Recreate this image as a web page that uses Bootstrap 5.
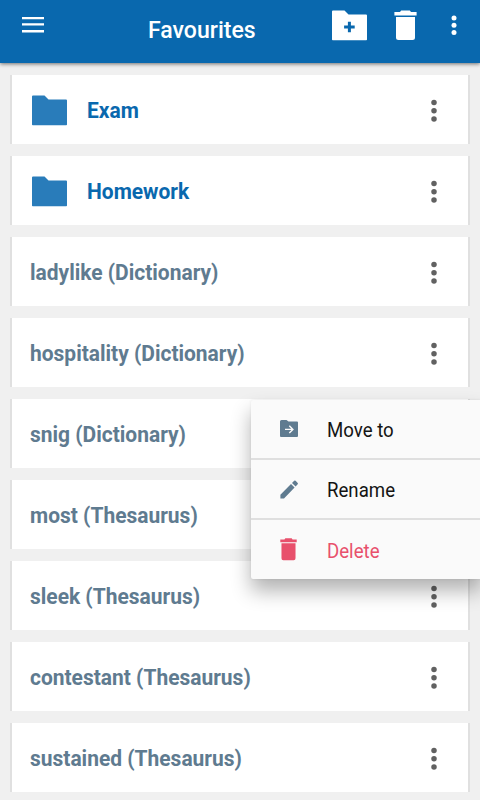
<!DOCTYPE html>
<html lang="en">
<head>
<meta charset="utf-8">
<meta name="viewport" content="width=device-width, initial-scale=1">
<title>Favourites</title>
<link rel="stylesheet" href="https://cdn.jsdelivr.net/npm/bootstrap@5.3.0/dist/css/bootstrap.min.css">
<style>
  body { font-family: Roboto, "Liberation Sans", sans-serif; background: #f0f0f0; height: 800px; overflow: hidden; }
  svg { display: block; flex: none; }
  .app-bar { height: 63px; background: #0968ae; box-shadow: 0 1px 4px rgba(0,0,0,.55); padding: 0; }
  .bar-btn { border: 0; background: none; padding: 0; color: #fff; }
  .menu-btn { margin: 16px 0 0 21.500px; }
  .app-title { font-size: 23px; font-weight: 500; line-height: 28px; color: #fff; margin: 17px 0 0 104.500px; width: 112px; white-space: nowrap; }
  .narrow { display: inline-block; transform-origin: 0 50%; transform: scaleX(.953); white-space: nowrap; }
  .app-title .narrow { transform: scaleX(1.003); }
  .bar-tools { margin: 10px 23px 0 0; }
  .more-btn { margin: 5px 0 0 34px; }
  .fav-list { padding: 12px 10px 0; gap: 12px; }
  .fav-item { height: 69px; background: #fff; border: solid #e0e0e0; border-width: 0 2px; border-radius: 0; padding: 3px 31.500px 0 18.400px; font-size: 22px; font-weight: 700; line-height: 30px; color: #5f7b90; }
  .fav-item.folder { color: #0968ae; padding-left: 20px; }
  .folder svg:first-child { margin: -2px 18.500px 0 0; }
  .dots { color: #616161; margin-top: -1px; }
  .fav-menu { left: 251px; top: 400px; width: 231px; height: 179px; background: #fafafa; border-radius: 2px; box-shadow: 0 12px 20px rgba(0,0,0,.3), 0 0 3px rgba(0,0,0,.08); font-size: 20px; color: #141414; }
  .menu-row { height: 60px; padding: 0 0 0 25.500px; border-bottom: 2px solid #dfdfdf; line-height: 28px; }
  .menu-row:last-child { border: 0; height: 59px; color: #e8506c; }
  .menu-row .icon { width: 24px; margin-right: 26px; display: flex; justify-content: center; color: #5f7b90; }
  .menu-row:last-child .icon { color: #e8506c; }
  .menu-row .narrow { transform: translateY(1px) scaleX(.932); }
</style>
</head>
<body>
<svg width="0" height="0" class="position-absolute">
  <symbol id="dots" viewBox="0 0 6 24"><circle cx="3" cy="3.400" r="2.750"/><circle cx="3" cy="11.700" r="2.750"/><circle cx="3" cy="20" r="2.750"/></symbol>
  <symbol id="folder" viewBox="0 0 36 31"><path d="M1 .5H12.500L16.500 4.500H34Q35 4.500 35 5.500V29.500Q35 30.300 34.200 30.300H.8Q0 30.300 0 29.500V1.500Q0 .5 1 .5Z"/></symbol>
  <symbol id="bin" viewBox="0 0 23 31"><path d="M.4 2H6L7.200.4H15.800L17 2H22.600V5.600H.4ZM2 7H21V27.500Q21 30 18.500 30H4.500Q2 30 2 27.500Z"/></symbol>
</svg>

<header class="app-bar navbar align-items-start position-relative flex-nowrap justify-content-start">
  <button class="bar-btn menu-btn" aria-label="Menu">
    <svg width="22" height="18" fill="currentColor"><path d="M0 .9H22V3.200H0ZM0 7.300H22V9.600H0ZM0 14H22V16.400H0Z"/></svg>
  </button>
  <h1 class="app-title"><span class="narrow">Favourites</span></h1>
  <div class="bar-tools d-flex align-items-start ms-auto">
    <button class="bar-btn" aria-label="New folder">
      <svg width="36" height="31" fill="currentColor"><use href="#folder" width="36" height="31"/><path d="M15.900 11.700h3v3.800h3.800v3h-3.800v3.800h-3v-3.800h-3.800v-3h3.800Z" fill="#0968ae"/></svg>
    </button>
    <button class="bar-btn ms-4 ps-0 pe-0" aria-label="Delete">
      <svg width="25" height="31" fill="currentColor"><use href="#bin" x="2" width="23" height="31"/></svg>
    </button>
    <button class="bar-btn more-btn" aria-label="More">
      <svg width="6" height="21" fill="currentColor"><circle cx="3" cy="3" r="2.500"/><circle cx="3" cy="10.300" r="2.500"/><circle cx="3" cy="17.600" r="2.500"/></svg>
    </button>
  </div>
</header>

<main class="fav-list d-flex flex-column">
  <div class="fav-item folder d-flex align-items-center"><svg width="36" height="31" fill="#297cba"><use href="#folder"/></svg><span class="narrow">Exam</span><svg class="dots ms-auto" width="6" height="24" fill="currentColor"><use href="#dots"/></svg></div>
  <div class="fav-item folder d-flex align-items-center"><svg width="36" height="31" fill="#297cba"><use href="#folder"/></svg><span class="narrow">Homework</span><svg class="dots ms-auto" width="6" height="24" fill="currentColor"><use href="#dots"/></svg></div>
  <div class="fav-item d-flex align-items-center"><span class="narrow">ladylike (Dictionary)</span><svg class="dots ms-auto" width="6" height="24" fill="currentColor"><use href="#dots"/></svg></div>
  <div class="fav-item d-flex align-items-center"><span class="narrow">hospitality (Dictionary)</span><svg class="dots ms-auto" width="6" height="24" fill="currentColor"><use href="#dots"/></svg></div>
  <div class="fav-item d-flex align-items-center"><span class="narrow">snig (Dictionary)</span><svg class="dots ms-auto" width="6" height="24" fill="currentColor"><use href="#dots"/></svg></div>
  <div class="fav-item d-flex align-items-center"><span class="narrow">most (Thesaurus)</span><svg class="dots ms-auto" width="6" height="24" fill="currentColor"><use href="#dots"/></svg></div>
  <div class="fav-item d-flex align-items-center"><span class="narrow">sleek (Thesaurus)</span><svg class="dots ms-auto" width="6" height="24" fill="currentColor"><use href="#dots"/></svg></div>
  <div class="fav-item d-flex align-items-center"><span class="narrow">contestant (Thesaurus)</span><svg class="dots ms-auto" width="6" height="24" fill="currentColor"><use href="#dots"/></svg></div>
  <div class="fav-item d-flex align-items-center"><span class="narrow">sustained (Thesaurus)</span><svg class="dots ms-auto" width="6" height="24" fill="currentColor"><use href="#dots"/></svg></div>
</main>

<div class="fav-menu position-absolute">
  <div class="menu-row d-flex align-items-center">
    <span class="icon"><svg width="18" height="18" fill="currentColor"><path d="M1.500 0H6.500L8.500 1.600H17Q18 1.600 18 2.600V16Q18 17 17 17H1Q0 17 0 16V1.500Q0 0 1.500 0Z"/><path d="M5 9.400H12.500M9.300 5.800L12.900 9.400L9.300 13" fill="none" stroke="#fafafa" stroke-width="1.400"/></svg></span>
    <span class="narrow">Move to</span>
  </div>
  <div class="menu-row d-flex align-items-center">
    <span class="icon"><svg width="18" height="19" fill="currentColor"><path d="M.4 14.800 11 3.900 14.600 7.600 4 18.500H.4ZM12 2.900 14.200.7Q14.900.1 15.600.7L17.700 2.900Q18.200 3.600 17.700 4.300L15.600 6.500Z"/></svg></span>
    <span class="narrow">Rename</span>
  </div>
  <div class="menu-row d-flex align-items-center">
    <span class="icon"><svg width="17" height="23" fill="currentColor"><use href="#bin"/></svg></span>
    <span class="narrow">Delete</span>
  </div>
</div>
<script src="https://cdn.jsdelivr.net/npm/bootstrap@5.3.0/dist/js/bootstrap.bundle.min.js"></script>
</body>
</html>
